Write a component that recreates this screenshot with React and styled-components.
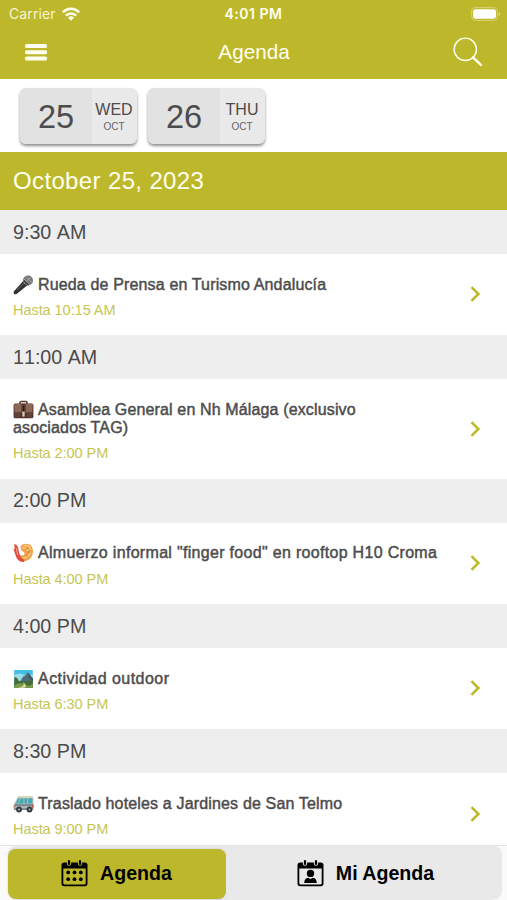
import styled, { createGlobalStyle } from "styled-components";

const green = "#bdb82b";

const events = [
    { time: "9:30 AM", icon: MicIcon, lines: ["Rueda de Prensa en Turismo Andalucía"], spacing: "0.15px", until: "10:15 AM" },
    { time: "11:00 AM", icon: BriefcaseIcon, lines: ["Asamblea General en Nh Málaga (exclusivo", "asociados TAG)"], spacing: "0.14px", until: "2:00 PM" },
    { time: "2:00 PM", icon: ShrimpIcon, lines: ['Almuerzo informal "finger food" en rooftop H10 Croma'], spacing: "0.31px", until: "4:00 PM" },
    { time: "4:00 PM", icon: ParkIcon, lines: ["Actividad outdoor"], spacing: "0.46px", until: "6:30 PM" },
    { time: "8:30 PM", icon: VanIcon, lines: ["Traslado hoteles a Jardines de San Telmo"], spacing: "0.16px", until: "9:00 PM" },
];

const days = [
    { number: 25, name: "WED", month: "OCT" },
    { number: 26, name: "THU", month: "OCT" },
];

export default function App() {
    return (
        <Screen>
            <GlobalStyle />
            <Header>
                <StatusBar>
                    <Carrier>Carrier <WifiIcon /></Carrier>
                    <Clock>4:01 PM</Clock>
                    <BatteryIcon />
                </StatusBar>
                <NavBar>
                    <MenuIcon />
                    <PageTitle>Agenda</PageTitle>
                    <SearchIcon />
                </NavBar>
            </Header>
            <Days>
                {days.map(day =>
                    <Day key={day.number}>
                        <DayNumber>{day.number}</DayNumber>
                        <DayInfo>
                            <DayName>{day.name}</DayName>
                            <Month>{day.month}</Month>
                        </DayInfo>
                    </Day>
                )}
            </Days>
            <DateBanner>October 25, 2023</DateBanner>
            <EventList>
                {events.map(event => {
                    const Icon = event.icon;
                    return (
                        <section key={event.time}>
                            <TimeBar>{event.time}</TimeBar>
                            <Event>
                                <EventText>
                                    <EventTitle $spacing={event.spacing}>
                                        <Emoji><Icon /></Emoji>
                                        {event.lines[0]}
                                        {event.lines[1] && <><br />{event.lines[1]}</>}
                                    </EventTitle>
                                    <Until>Hasta {event.until}</Until>
                                </EventText>
                                <Chevron />
                            </Event>
                        </section>
                    );
                })}
            </EventList>
            <Footer>
                <Tabs>
                    <Tab $active>
                        <CalendarIcon />
                        Agenda
                    </Tab>
                    <Tab>
                        <CalendarIcon person />
                        Mi Agenda
                    </Tab>
                </Tabs>
            </Footer>
        </Screen>
    );
}

function WifiIcon() {
    return (
        <svg width="18" height="14" viewBox="0 0 18 14" fill="none" stroke="#fffff0" strokeWidth="2.6">
            <path d="M0.9 5.3C5.5 0.6 12.5 0.6 17.1 5.3" />
            <path d="M3.9 8.7C6.8 5.8 11.2 5.8 14.1 8.7" />
            <path d="M6 10.7Q9 7.9 12 10.7L9 13.8Z" fill="#fffff0" stroke="none" />
        </svg>
    );
}

function BatteryIcon() {
    return (
        <svg width="30" height="14" viewBox="0 0 30 14">
            <rect x="0.6" y="0.6" width="25.8" height="12.8" rx="4" fill="none" stroke="#d8d477" />
            <rect x="2" y="2.3" width="23" height="9.4" rx="2.4" fill="#fff" />
            <path d="M27.7 5v4q1.6-.6 1.6-2t-1.6-2z" fill="#d8d477" />
        </svg>
    );
}

function MenuIcon() {
    return (
        <svg width="22" height="17" viewBox="0 0 22 17" fill="#fffff0">
            <rect width="22" height="4" rx="1.5" />
            <rect y="6.2" width="22" height="4" rx="1.5" />
            <rect y="12.4" width="22" height="4" rx="1.5" />
        </svg>
    );
}

function SearchIcon() {
    return (
        <svg width="30" height="30" viewBox="0 0 30 30" fill="none" stroke="#fffff0">
            <circle cx="12.3" cy="12.3" r="11.2" strokeWidth="1.4" />
            <path d="M20 20.3L28 28" strokeWidth="2.4" strokeLinecap="round" />
        </svg>
    );
}

function Chevron() {
    return (
        <ChevronSvg width="11" height="16" viewBox="0 0 11 16" fill="none" stroke={green} strokeWidth="2.5">
            <path d="M1.5 1.2L8.4 8L1.5 14.8" />
        </ChevronSvg>
    );
}

function CalendarIcon({ person }) {
    return (
        <svg width="27" height="27" viewBox="0 0 27 27">
            <path
                fillRule="evenodd"
                d="M3.2 2.4H23.8Q26.5 2.4 26.5 5.1V23.6Q26.5 26.3 23.8 26.3H3.2Q.5 26.3.5 23.6V5.1Q.5 2.4 3.2 2.4ZM2.3 8.6V23.3Q2.3 24.6 3.6 24.6H23.4Q24.7 24.6 24.7 23.3V8.6Z"
            />
            {[8, 19].map(x =>
                <g key={x}>
                    <rect x={x - 2.1} y="-1" width="4.2" height="6.8" rx="2.1" fill={person ? "#e9e9e9" : green} />
                    <rect x={x - 1.1} y="0" width="2.2" height="5" rx="1.1" />
                </g>
            )}
            {person
                ? <g>
                    <circle cx="13.5" cy="13.4" r="3.7" />
                    <path d="M7.2 22.9q0-4.3 3.9-5.1l2.4 1.3 2.4-1.3q3.9.8 3.9 5.1z" />
                </g>
                : [12.4, 19.2].map(y => [7.2, 13.5, 19.8].map(x =>
                    <circle key={`${x}-${y}`} cx={x} cy={y} r="1.9" />
                ))}
        </svg>
    );
}

function MicIcon() {
    return (
        <svg width="21" height="20" viewBox="0 0 21 20">
            <path d="M.8 16.4L10.6 5.6L15 9.8L3.6 19Q.2 20 .8 16.4Z" fill="#303030" />
            <path d="M4 15.2L12 7.4" stroke="#777" strokeWidth=".9" />
            <circle cx="15" cy="5.5" r="5" fill="#777" />
            <path d="M11 4L17 9.8M13 1.7L19 7.5M11.5 8L18.5 2" stroke="#b5b5b5" strokeWidth=".8" />
            <path d="M11 5.5L15.7 10" stroke="#3c3c3c" strokeWidth="1.6" />
        </svg>
    );
}

function BriefcaseIcon() {
    return (
        <svg width="21" height="20" viewBox="0 0 21 20">
            <path d="M7 4V2.4Q7 1.4 8 1.4h5q1 0 1 1V4" fill="none" stroke="#5c3b32" strokeWidth="1.5" />
            <rect x=".6" y="3.5" width="19.8" height="14.8" rx="1.5" fill="#4d3029" />
            <path d="M1.2 4H19.8L19.4 12.4H1.6Z" fill="#8c6859" />
            <path d="M1.6 12.4H7.5V17.6H1.2ZM13.5 12.4H19.4V17.6H13.5Z" fill="#62433a" />
            <path d="M8.4 3.8h4.2V12H8.4z" fill="#57362c" />
            <path d="M9.3 11.6h2.4v5H9.3z" fill="#dac8b5" />
            <path d="M10 6h1v5h-1z" fill="#2e1b17" />
        </svg>
    );
}

function ShrimpIcon() {
    return (
        <svg width="21" height="20" viewBox="0 0 21 20">
            <path d="M9.2 1.6Q18.8-1.3 20 7.3Q20.5 17.5 10.5 18.3Q5.6 17 5 11.6Q9.6 13.4 11.4 11.2Q12.2 8.8 8.8 8Q6 4.5 9.2 1.6Z" fill="#f0a34e" />
            <path d="M11 2.8Q16 1 17.8 6.8M9.2 5Q15 4.5 14.8 8.5M10 15.3Q16 14.3 17.5 9.5" fill="none" stroke="#ffcf7e" strokeWidth="1.3" />
            <path d="M12.5 6.2L15 5M14 9l3 .1M12.8 12l2.3 1.5" stroke="#db7736" />
            <path d="M1 1.2Q4.3.9 5.1 5.1L6.6 11.4Q7.6 15 11 16.4L11.5 19Q5.2 19.4 3.2 14L.6 6.5L1.8 5Z" fill="#df4e40" />
            <path d="M3.1 4.8L4.8 12" stroke="#f5998b" strokeWidth="1.1" />
        </svg>
    );
}

function ParkIcon() {
    return (
        <svg width="21" height="20" viewBox="0 0 21 20">
            <rect x="1.2" y="1" width="18.6" height="17.8" fill="#43bfe9" />
            <path d="M1.2 6Q7 3 11 6T19.8 5V12H1.2Z" fill="#9bdeea" />
            <path d="M6.8 13L10.2 7.5L12.2 7L14.8 3.3L19.8 9.5V14Z" fill="#506c78" />
            <path d="M14.7 3.4L16.1 9L19.8 12V9.4Z" fill="#3f5661" />
            <path d="M1.2 8.3Q4.4 7.8 5.2 11.5L9 12.5L19.8 11.5V18.8H1.2Z" fill="#456d37" />
            <path d="M1.2 16.5Q7 12.8 11.5 15.5T19.8 15V18.8H1.2Z" fill="#7d9b47" />
            <path d="M4 18.8Q13 17.3 10 13.2Q15 16.5 11.5 18.8Z" fill="#d8d7a2" />
        </svg>
    );
}

function VanIcon() {
    return (
        <svg width="21" height="20" viewBox="0 0 21 20">
            <path d="M5.3 2.5H19Q20.3 2.5 20.4 4V15.6H1Q.2 12.8 1 10.5L4.2 4Q4.6 2.5 5.3 2.5Z" fill="#aebabd" />
            <path d="M5.6 2.1H18.6Q20 2.1 20.2 3.7H4.8Z" fill="#ddd7bb" />
            <path d="M5.3 4.6H10.4V9.6H2.8ZM11.4 4.6H19.3V9.6H11.4Z" fill="#48a8b2" />
            <path d="M7.5 4.6L5.2 9.6M14.6 4.5V9.6" stroke="#7dd1d3" />
            <path d="M1 11.2H20.3M1 15.2H20" stroke="#626d72" strokeWidth="1.2" />
            <rect x=".6" y="11.5" width="2.3" height="1.9" fill="#ec7968" />
            <path d="M19.2 10.7h1.3v3h-1.3z" fill="#ca3d35" />
            <circle cx="6" cy="15.5" r="2.9" fill="#34383b" />
            <circle cx="16.5" cy="15.5" r="2.9" fill="#34383b" />
            <circle cx="6" cy="15.5" r="1.1" fill="#a8afb2" />
            <circle cx="16.5" cy="15.5" r="1.1" fill="#a8afb2" />
        </svg>
    );
}

const GlobalStyle = createGlobalStyle`
    * {
        box-sizing: border-box;
    }
    body {
        margin: 0;
        font-family: "Liberation Sans", Arial, sans-serif;
        color: #4c4c4c;
        background: #fff;
    }
    svg {
        display: block;
        flex-shrink: 0;
    }
`;

const Screen = styled.div`
    display: flex;
    flex-direction: column;
    width: 507px;
    height: 900px;
    overflow: hidden;
    background: #fff;
`;

const Header = styled.header`
    height: 79px;
    flex-shrink: 0;
    background: ${green};
    color: #fffff0;
`;

const StatusBar = styled.div`
    display: grid;
    grid-template-columns: 1fr auto 1fr;
    align-items: center;
    height: 27px;
    padding: 0 6px 0 9px;
    > svg {
        justify-self: end;
    }
`;

const Carrier = styled.div`
    display: flex;
    align-items: center;
    gap: 6px;
    font-family: Inter, sans-serif;
    font-size: 14px;
    letter-spacing: 0.1px;
    color: #f6f4d2;
`;

const Clock = styled.div`
    margin-right: 3px;
    font-family: Inter, sans-serif;
    font-size: 14px;
    font-weight: 600;
    letter-spacing: 0.5px;
`;

const NavBar = styled.nav`
    display: grid;
    grid-template-columns: 1fr auto 1fr;
    align-items: center;
    height: 50px;
    padding: 0 24px 0 25px;
    > svg:last-child {
        justify-self: end;
    }
`;

const PageTitle = styled.h1`
    margin: 0;
    font-size: 20.7px;
    font-weight: 400;
`;

const Days = styled.div`
    display: flex;
    flex-shrink: 0;
    gap: 11px;
    height: 73px;
    padding: 9px 20px;
`;

const Day = styled.div`
    display: flex;
    width: 117px;
    height: 56px;
    border-radius: 6px;
    overflow: hidden;
    background: #e9e9e9;
    box-shadow: 0 2px 3px rgba(0, 0, 0, 0.45);
`;

const DayNumber = styled.div`
    display: flex;
    align-items: center;
    justify-content: center;
    width: 72px;
    padding-top: 2px;
    background: #e2e2e2;
    font-size: 32.5px;
`;

const DayInfo = styled.div`
    display: flex;
    flex-direction: column;
    align-items: center;
    width: 44px;
    padding-top: 12px;
`;

const DayName = styled.div`
    font-size: 16px;
    line-height: 19px;
`;

const Month = styled.div`
    font-size: 10px;
    line-height: 16px;
    color: #666;
`;

const DateBanner = styled.h2`
    display: flex;
    align-items: center;
    flex-shrink: 0;
    height: 58px;
    margin: 0;
    padding-left: 13px;
    background: ${green};
    color: #fffff0;
    font-size: 24px;
    font-weight: 400;
    letter-spacing: 0.36px;
`;

const EventList = styled.main`
    height: 635px;
    flex-shrink: 0;
    overflow: hidden;
`;

const TimeBar = styled.div`
    display: flex;
    align-items: center;
    height: 44px;
    padding-left: 13px;
    background: #eee;
    font-size: 19.7px;
    font-kerning: none;
`;

const Event = styled.div`
    display: flex;
    align-items: center;
    justify-content: space-between;
    padding: 21.6px 26px 16.5px 13px;
`;

const EventText = styled.div`
    white-space: nowrap;
`;

const EventTitle = styled.div`
    font-size: 16px;
    line-height: 18.2px;
    letter-spacing: ${props => props.$spacing};
    -webkit-text-stroke: 0.45px #4c4c4c;
`;

const Emoji = styled.span`
    display: inline-block;
    width: 21px;
    height: 18px;
    margin: -1px 4px 0 0;
    vertical-align: top;
`;

const Until = styled.div`
    margin-top: 7px;
    font-size: 14.5px;
    line-height: 18px;
    letter-spacing: -0.05px;
    color: #c5c653;
`;

const ChevronSvg = styled.svg`
    margin-bottom: 6px;
`;

const Footer = styled.footer`
    flex-shrink: 0;
    height: 55px;
    padding: 0 5px 0 8px;
    border-top: 1px solid #e4e4e4;
    background: #fafafa;
`;

const Tabs = styled.div`
    display: flex;
    height: 54px;
    padding: 3px 0 1px;
    border-radius: 8px 8px 10px 10px;
    background: #e9e9e9;
`;

const Tab = styled.div`
    display: flex;
    align-items: center;
    justify-content: center;
    gap: 12px;
    width: ${props => props.$active ? "218px" : "276px"};
    flex-shrink: 0;
    height: 50px;
    padding: ${props => props.$active ? "0 1px 1px 0" : "0 0 1px 3px"};
    border-radius: 8px;
    background: ${props => props.$active ? green : "#e9e9e9"};
    box-shadow: ${props => props.$active ? "0 0 2px rgba(0, 0, 0, 0.2)" : "none"};
    color: #000;
    font-size: 19.6px;
    font-weight: 700;
`;
